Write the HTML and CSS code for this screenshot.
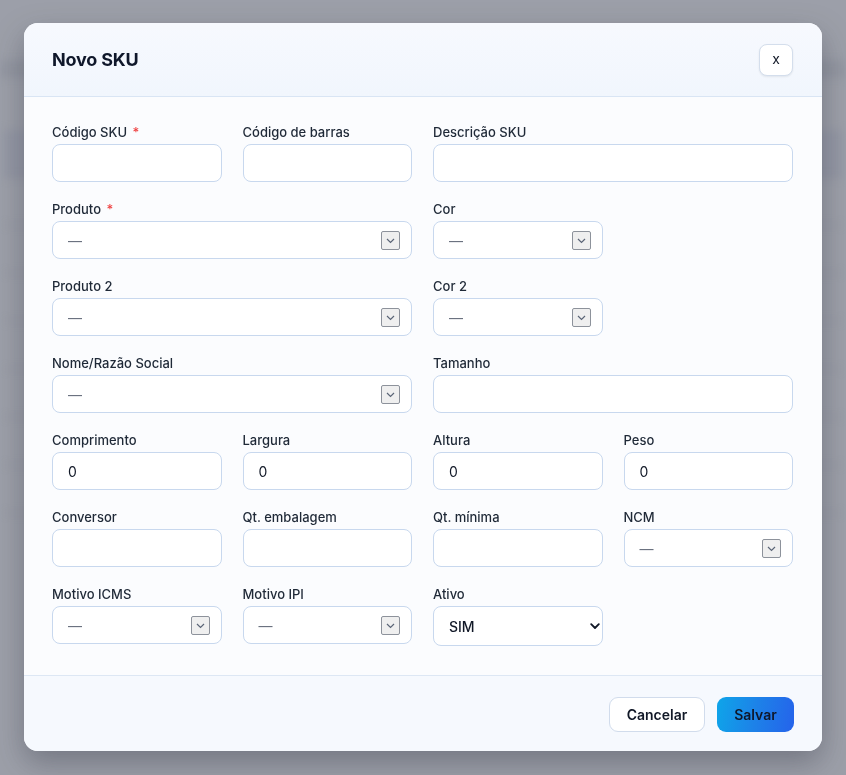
FILE: index.html
```html
<!DOCTYPE html>
<html lang="pt-BR">
<head>
    <meta charset="UTF-8">
    <meta name="viewport" content="width=device-width, initial-scale=1.0">
    <title>Novo SKU</title>
    <link rel="stylesheet" href="styles.css">
</head>
<body>
    <!-- Blurred page behind the dialog -->
    <div class="page">
        <div class="page-bar"></div>
        <div class="page-row head"></div>
        <div class="page-row"></div>
        <div class="page-row"></div>
        <div class="page-row"></div>
        <div class="page-row"></div>
        <div class="page-row"></div>
        <div class="page-row"></div>
        <div class="page-row"></div>
        <div class="page-row last"><span class="blob"></span><span class="blob small"></span></div>
    </div>

    <div class="overlay">
        <div class="modal">
            <div class="modal-header">
                <h2>Novo SKU</h2>
                <button class="close-btn">x</button>
            </div>

            <div class="modal-body">
                <div class="form-grid">
                    <div class="field">
                        <label>Código SKU <span class="req">*</span></label>
                        <input type="text" class="text-field">
                    </div>
                    <div class="field">
                        <label>Código de barras</label>
                        <input type="text" class="text-field">
                    </div>
                    <div class="field span-2">
                        <label>Descrição SKU</label>
                        <input type="text" class="text-field">
                    </div>

                    <div class="field span-2">
                        <label>Produto <span class="req">*</span></label>
                        <div class="combo"><span class="combo-value">—</span><span class="combo-arrow"><svg width="9" height="6" viewBox="0 0 9 6"><path d="M1 1l3.5 3.5L8 1" fill="none" stroke="#5b6577" stroke-width="1.2"/></svg></span></div>
                    </div>
                    <div class="field">
                        <label>Cor</label>
                        <div class="combo"><span class="combo-value">—</span><span class="combo-arrow"><svg width="9" height="6" viewBox="0 0 9 6"><path d="M1 1l3.5 3.5L8 1" fill="none" stroke="#5b6577" stroke-width="1.2"/></svg></span></div>
                    </div>
                    <div class="field"></div>

                    <div class="field span-2">
                        <label>Produto 2</label>
                        <div class="combo"><span class="combo-value">—</span><span class="combo-arrow"><svg width="9" height="6" viewBox="0 0 9 6"><path d="M1 1l3.5 3.5L8 1" fill="none" stroke="#5b6577" stroke-width="1.2"/></svg></span></div>
                    </div>
                    <div class="field">
                        <label>Cor 2</label>
                        <div class="combo"><span class="combo-value">—</span><span class="combo-arrow"><svg width="9" height="6" viewBox="0 0 9 6"><path d="M1 1l3.5 3.5L8 1" fill="none" stroke="#5b6577" stroke-width="1.2"/></svg></span></div>
                    </div>
                    <div class="field"></div>

                    <div class="field span-2">
                        <label>Nome/Razão Social</label>
                        <div class="combo"><span class="combo-value">—</span><span class="combo-arrow"><svg width="9" height="6" viewBox="0 0 9 6"><path d="M1 1l3.5 3.5L8 1" fill="none" stroke="#5b6577" stroke-width="1.2"/></svg></span></div>
                    </div>
                    <div class="field span-2">
                        <label>Tamanho</label>
                        <input type="text" class="text-field">
                    </div>

                    <div class="field">
                        <label>Comprimento</label>
                        <input type="text" class="text-field" value="0">
                    </div>
                    <div class="field">
                        <label>Largura</label>
                        <input type="text" class="text-field" value="0">
                    </div>
                    <div class="field">
                        <label>Altura</label>
                        <input type="text" class="text-field" value="0">
                    </div>
                    <div class="field">
                        <label>Peso</label>
                        <input type="text" class="text-field" value="0">
                    </div>

                    <div class="field">
                        <label>Conversor</label>
                        <input type="text" class="text-field">
                    </div>
                    <div class="field">
                        <label>Qt. embalagem</label>
                        <input type="text" class="text-field">
                    </div>
                    <div class="field">
                        <label>Qt. mínima</label>
                        <input type="text" class="text-field">
                    </div>
                    <div class="field">
                        <label>NCM</label>
                        <div class="combo"><span class="combo-value">—</span><span class="combo-arrow"><svg width="9" height="6" viewBox="0 0 9 6"><path d="M1 1l3.5 3.5L8 1" fill="none" stroke="#5b6577" stroke-width="1.2"/></svg></span></div>
                    </div>

                    <div class="field">
                        <label>Motivo ICMS</label>
                        <div class="combo"><span class="combo-value">—</span><span class="combo-arrow"><svg width="9" height="6" viewBox="0 0 9 6"><path d="M1 1l3.5 3.5L8 1" fill="none" stroke="#5b6577" stroke-width="1.2"/></svg></span></div>
                    </div>
                    <div class="field">
                        <label>Motivo IPI</label>
                        <div class="combo"><span class="combo-value">—</span><span class="combo-arrow"><svg width="9" height="6" viewBox="0 0 9 6"><path d="M1 1l3.5 3.5L8 1" fill="none" stroke="#5b6577" stroke-width="1.2"/></svg></span></div>
                    </div>
                    <div class="field">
                        <label>Ativo</label>
                        <div class="select-wrap">
                            <select class="select-field">
                                <option>SIM</option>
                                <option>NÃO</option>
                            </select>
                            <svg class="select-chevron" width="10" height="7" viewBox="0 0 10 7"><path d="M1.2 1.2L5 5l3.8-3.8" fill="none" stroke="#111827" stroke-width="1.8" stroke-linecap="round" stroke-linejoin="round"/></svg>
                        </div>
                    </div>
                </div>
            </div>

            <div class="modal-footer">
                <button class="btn btn-cancel">Cancelar</button>
                <button class="btn btn-save">Salvar</button>
            </div>
        </div>
    </div>
</body>
</html>
```

FILE: styles.css
```css
/* Basic styling */
* {
    box-sizing: border-box;
}

body {
    margin: 0;
    font-family: Inter, "Noto Sans", Arial, sans-serif;
    background-color: #a0a3ac;
    color: #1f2937;
    height: 775px;
    overflow: hidden;
}

/* Page behind the overlay */
.page {
    filter: blur(4px);
    padding-top: 60px;
}

.page-bar {
    height: 18px;
    margin: 0 0 52px;
    background: rgba(120, 125, 138, 0.3);
}

.page-row {
    height: 48px;
    margin: 0 4px;
    border-bottom: 2px solid rgba(130, 134, 146, 0.3);
}

.page-row.head {
    background: rgba(130, 136, 158, 0.4);
}

.page-row.last {
    display: flex;
    gap: 70px;
    padding: 24px 0 0 150px;
    border: none;
}

.blob {
    width: 380px;
    height: 10px;
    background: rgba(70, 74, 86, 0.4);
}

.blob.small {
    width: 110px;
    margin-left: 70px;
}

/* Overlay + modal */
.overlay {
    position: fixed;
    inset: 0;
    padding: 23px 24px;
    background: rgba(150, 153, 162, 0.3);
}

.modal {
    width: 798px;
    border-radius: 14px;
    background: #fbfcfe;
    box-shadow: 0 12px 30px rgba(40, 44, 56, 0.35);
    overflow: hidden;
}

.modal-header {
    height: 74px;
    display: flex;
    justify-content: space-between;
    align-items: center;
    padding: 0 29px 0 28px;
    background: linear-gradient(180deg, #f7f9fe 0%, #f1f6fd 100%);
    border-bottom: 1px solid #d9e5f4;
}

.modal-header h2 {
    margin: 0;
    font-size: 18px;
    font-weight: 700;
    color: #0f172a;
    letter-spacing: -0.2px;
}

.close-btn {
    width: 34px;
    height: 32px;
    border: 1px solid #d4deec;
    border-radius: 8px;
    background: #fff;
    box-shadow: 0 1px 2px rgba(15, 23, 42, 0.08);
    font-family: inherit;
    font-size: 14px;
    color: #111827;
    padding: 0 0 2px;
    cursor: pointer;
}

.modal-body {
    padding: 27px 29px 29px 28px;
}

.form-grid {
    display: grid;
    grid-template-columns: repeat(4, 1fr);
    column-gap: 21px;
    row-gap: 19px;
}

.field {
    display: flex;
    flex-direction: column;
}

.span-2 {
    grid-column: span 2;
}

.field label {
    font-size: 13px;
    line-height: 16px;
    font-weight: 500;
    color: #1f2937;
    margin-bottom: 4px;
}

.req {
    color: #ef4444;
    margin-left: 2px;
}

.text-field {
    height: 38px;
    width: 100%;
    border: 1px solid #c8d8ee;
    border-radius: 8px;
    background: #fff;
    padding: 0 15px;
    font-family: inherit;
    font-size: 14px;
    color: #111827;
    outline: none;
}

/* Combo box with the small square arrow */
.combo {
    height: 38px;
    display: flex;
    align-items: center;
    justify-content: space-between;
    border: 1px solid #c8d8ee;
    border-radius: 8px;
    background: #fff;
    padding: 0 11px 0 15px;
}

.combo-value {
    font-size: 14px;
    color: #6b7280;
}

.combo-arrow {
    width: 19px;
    height: 19px;
    display: flex;
    align-items: center;
    justify-content: center;
    border: 1px solid #8d929b;
    border-radius: 2px;
    background: #efefef;
    margin-top: 1px;
}

.select-wrap {
    position: relative;
}

.select-field {
    appearance: none;
    -webkit-appearance: none;
    height: 40px;
    width: 100%;
    border: 1px solid #c8d8ee;
    border-radius: 8px;
    background: #fff;
    padding: 0 15px;
    font-family: inherit;
    font-size: 14px;
    font-weight: 500;
    color: #111827;
}

.select-chevron {
    position: absolute;
    right: 3px;
    top: 17px;
    pointer-events: none;
}

.modal-footer {
    display: flex;
    justify-content: flex-end;
    gap: 12px;
    padding: 21px 28px 19px;
    border-top: 1px solid #dde7f4;
    background: #f6f9fe;
}

.btn {
    height: 35px;
    border-radius: 9px;
    font-family: inherit;
    font-size: 14px;
    font-weight: 600;
    color: #111827;
    cursor: pointer;
}

.btn-cancel {
    width: 96px;
    border: 1px solid #d1dcec;
    background: #fff;
}

.btn-save {
    width: 77px;
    border: none;
    background: linear-gradient(100deg, #0ea5e9 0%, #1d82e8 50%, #2563eb 100%);
    color: #0f172a;
}
```
